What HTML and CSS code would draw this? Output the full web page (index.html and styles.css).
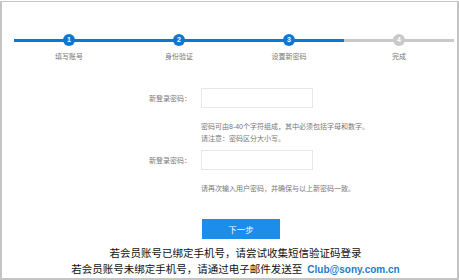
FILE: index.html
```html
<!DOCTYPE html>
<html lang="zh-CN">
  <head>
    <meta charset="UTF-8" />
    <title>找回密码 - 设置新密码</title>
    <link rel="stylesheet" href="styles.css">
  </head>
  <body>
    <div class="frame">
      <ol class="steps">
        <li class="step done"><span class="dot">1</span><span class="step-name">填写账号</span></li>
        <li class="step done"><span class="dot">2</span><span class="step-name">身份验证</span></li>
        <li class="step done current"><span class="dot">3</span><span class="step-name">设置新密码</span></li>
        <li class="step"><span class="dot">4</span><span class="step-name">完成</span></li>
      </ol>

      <form class="reset-form">
        <div class="row">
          <label class="row-label" for="pwd1">新登录密码：</label>
          <input class="field" type="password" id="pwd1" />
        </div>
        <p class="hint hint-first">密码可由8-40个字符组成，其中必须包括字母和数字。<br />请注意：密码区分大小写。</p>
        <div class="row row-second">
          <label class="row-label" for="pwd2">新登录密码：</label>
          <input class="field" type="password" id="pwd2" />
        </div>
        <p class="hint hint-second">请再次输入用户密码，并确保与以上新密码一致。</p>
        <button type="submit" class="next-btn">下一步</button>
      </form>

      <div class="notice">
        <p>若会员账号已绑定手机号，请尝试收集短信验证码登录</p>
        <p>若会员账号未绑定手机号，请通过电子邮件发送至 <a class="mail" href="mailto:Club@sony.com.cn">Club@sony.com.cn</a></p>
      </div>
    </div>
  </body>
</html>
```
FILE: styles.css
```css
html,
body {
  margin: 0;
  background: #fff;
}
body {
  font-family: "Liberation Sans", "Noto Sans CJK SC", sans-serif;
  color: #666;
}
.frame {
  box-sizing: border-box;
  width: 459px;
  height: 279px;
  margin-top: 1px;
  border: 2px solid #c4c4c4;
  border-top-width: 1px;
  border-bottom-width: 2px;
  overflow: hidden;
}
.steps {
  list-style: none;
  margin: 32px 0 0 12px;
  padding: 0;
  display: grid;
  grid-template-columns: repeat(4, 110px);
}
.step {
  display: flex;
  flex-direction: column;
  align-items: center;
  background: linear-gradient(#c9c9c9, #c9c9c9) no-repeat 0 5px / 100% 3px;
}
.step.done {
  background-image: linear-gradient(#0b77d5, #0b77d5);
}
.dot {
  box-sizing: border-box;
  width: 12px;
  height: 12px;
  border-radius: 50%;
  background: #c9c9c9;
  color: #fff;
  font-size: 7px;
  font-weight: 700;
  line-height: 12px;
  text-align: center;
}
.done .dot {
  background: #0b77d5;
}
.step-name {
  margin-top: 6px;
  font-size: 7px;
  line-height: 10px;
  color: #777;
}
.reset-form {
  margin: 26px 0 0;
}
.row {
  display: flex;
  align-items: center;
}
.row-label {
  width: 199px;
  padding-right: 10px;
  box-sizing: border-box;
  text-align: right;
  font-size: 7px;
  color: #777;
}
.field {
  box-sizing: border-box;
  width: 112px;
  height: 20px;
  margin: 0;
  padding: 0 4px;
  border: 1px solid #e6e6e6;
  outline: none;
}
.hint {
  margin: 13px 0 0 199px;
  font-size: 7px;
  line-height: 12px;
  color: #777;
}
.row-second {
  margin-top: 5px;
}
.next-btn {
  display: block;
  width: 78px;
  height: 20px;
  margin: 24px 0 0 200px;
  padding: 0;
  border: none;
  background: #1d8deb;
  color: #fff;
  font-family: inherit;
  font-size: 8.5px;
  cursor: pointer;
}
.notice {
  margin-top: 6px;
  padding-left: 12px;
  text-align: center;
  font-size: 10.5px;
  line-height: 16px;
  color: #111;
}
.notice p {
  margin: 0;
}
.mail {
  color: #1c7dc9;
  text-decoration: none;
  font-weight: 700;
  font-size: 10px;
  margin-left: 2px;
}
```
